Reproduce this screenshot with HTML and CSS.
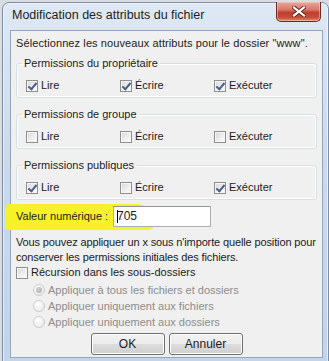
FILE: index.html
```html
<!DOCTYPE html>
<html lang="fr">
<head>
  <meta charset="UTF-8" />
  <meta name="viewport" content="width=device-width, initial-scale=1.0"/>
  <title>Modification des attributs du fichier</title>
  <link rel="stylesheet" href="styles.css">
</head>
<body>
  <div class="window">
    <div class="titlebar">
      <span class="title">Modification des attributs du fichier</span>
      <button class="close" type="button" aria-label="Fermer">
        <svg width="14" height="11" viewBox="0 0 14 11">
          <path d="M2 1.5 L12 9.5 M12 1.5 L2 9.5" stroke="#5a2a24" stroke-width="4" stroke-linecap="square"/>
          <path d="M2 1.5 L12 9.5 M12 1.5 L2 9.5" stroke="#ffffff" stroke-width="2.2" stroke-linecap="square"/>
        </svg>
      </button>
    </div>
    <div class="client">
      <p class="intro">Sélectionnez les nouveaux attributs pour le dossier "www".</p>

      <fieldset class="group">
        <legend>Permissions du propriétaire</legend>
        <div class="perm-row">
          <label class="check"><span class="box checked"></span>Lire</label>
          <label class="check"><span class="box checked"></span>Écrire</label>
          <label class="check"><span class="box checked"></span>Exécuter</label>
        </div>
      </fieldset>

      <fieldset class="group">
        <legend>Permissions de groupe</legend>
        <div class="perm-row">
          <label class="check"><span class="box"></span>Lire</label>
          <label class="check"><span class="box"></span>Écrire</label>
          <label class="check"><span class="box"></span>Exécuter</label>
        </div>
      </fieldset>

      <fieldset class="group">
        <legend>Permissions publiques</legend>
        <div class="perm-row">
          <label class="check"><span class="box checked"></span>Lire</label>
          <label class="check"><span class="box"></span>Écrire</label>
          <label class="check"><span class="box checked"></span>Exécuter</label>
        </div>
      </fieldset>

      <div class="value-row">
        <span class="marker"></span>
        <label class="value-label">Valeur numérique :</label>
        <div class="field"><span class="caret"></span>705</div>
      </div>

      <p class="hint">Vous pouvez appliquer un x sous n'importe quelle position pour<br>conserver les permissions initiales des fichiers.</p>

      <label class="check recursion"><span class="box"></span>Récursion dans les sous-dossiers</label>

      <div class="radios">
        <div class="radio"><span class="dot selected"></span>Appliquer à tous les fichiers et dossiers</div>
        <div class="radio"><span class="dot"></span>Appliquer uniquement aux fichiers</div>
        <div class="radio"><span class="dot"></span>Appliquer uniquement aux dossiers</div>
      </div>

      <div class="buttons">
        <button type="button" class="btn">OK</button>
        <button type="button" class="btn">Annuler</button>
      </div>
    </div>
  </div>
</body>
</html>
```

FILE: styles.css
```css
* {
  box-sizing: border-box;
  font-family: 'Liberation Sans', Arial, sans-serif;
}

body {
  margin: 0;
  background-color: #d9dde2;
  height: 361px;
  overflow: hidden;
  font-size: 11px;
  line-height: 15px;
  color: #1b1b1b;
  white-space: nowrap;
}

.window {
  margin: 2px 0 0 2px;
  width: 327px;
  height: 362px;
  border: 1px solid #7b8ea6;
  border-radius: 7px 7px 0 0;
  background: linear-gradient(to bottom, #dfe9f5 0%, #cbdaed 40%, #c2d4ea 100%);
  box-shadow: inset 0 0 0 1px rgba(255, 255, 255, 0.55);
  padding: 0 5px 0 7px;
}

.titlebar {
  height: 27px;
  display: flex;
  align-items: flex-start;
}

.title {
  margin: 4px 0 0 2px;
  font-size: 12.5px;
  line-height: 16px;
  color: #1e1e1e;
}

.close {
  margin: -1px 2px 0 auto;
  width: 45px;
  height: 20px;
  padding: 0;
  border: 1px solid #6b2b22;
  border-top: none;
  border-radius: 0 0 5px 5px;
  background: linear-gradient(to bottom, #e9a99a 0%, #d7786a 40%, #c0402f 55%, #c94a37 80%, #e08a6e 100%);
  box-shadow: inset 0 0 0 1px rgba(255, 220, 210, 0.45);
  display: flex;
  align-items: center;
  justify-content: center;
}

.client {
  width: 313px;
  height: 328px;
  border: 1px solid #95a6bb;
  background-color: #f0f0f0;
  padding: 5px 5px 4px 5px;
}

.intro {
  margin: 0 0 5px 0;
  letter-spacing: 0.1px;
}

.group {
  margin: 0 0 9px 0;
  padding: 7px 0 4px 9px;
  border: 1px solid #d5dfe5;
  border-radius: 3px;
  box-shadow: inset 0 0 0 1px #ffffff;
  width: 301px;
}

.group legend {
  padding: 0 2px;
  margin-left: -4px;
}

.perm-row {
  display: grid;
  grid-template-columns: 94px 94px auto;
}

.check {
  display: flex;
  align-items: center;
  gap: 3px;
}

.box {
  width: 12px;
  height: 12px;
  border: 1px solid #8e8f8f;
  background: linear-gradient(135deg, #d6d6d6 0%, #f4f4f4 70%, #ffffff 100%);
  box-shadow: inset 0 0 0 1px #f6f6f6;
  position: relative;
}

.box.checked::after {
  content: "";
  position: absolute;
  left: 3px;
  top: 0px;
  width: 3px;
  height: 7px;
  border: solid #4a5f88;
  border-width: 0 2px 2px 0;
  transform: rotate(40deg);
}

.value-row {
  position: relative;
  display: flex;
  align-items: center;
  margin-top: -4px;
  height: 22px;
}

.marker {
  position: absolute;
  left: -11px;
  top: -1px;
  width: 150px;
  height: 26px;
  background-color: #f6f227;
  border-radius: 10px 40px 14px 6px;
}

.value-label {
  position: relative;
  width: 97px;
}

.field {
  position: relative;
  width: 98px;
  height: 21px;
  border: 1px solid #abadb3;
  border-top-color: #8f9299;
  background-color: #ffffff;
  padding: 2px 3px;
  font-size: 12px;
  line-height: 15px;
  display: flex;
  align-items: center;
}

.caret {
  width: 1px;
  height: 13px;
  background-color: #000000;
  margin-right: -1px;
}

.hint {
  margin: 8px 0 0 0;
  letter-spacing: -0.13px;
}

.recursion {
  margin-top: 0;
}

.radios {
  margin: 2px 0 0 17px;
  color: #8d8d8d;
}

.radio {
  display: flex;
  align-items: center;
  gap: 3px;
  height: 16px;
}

.dot {
  width: 12px;
  height: 12px;
  border-radius: 50%;
  border: 1px solid #cdcdcd;
  background: radial-gradient(circle at 40% 35%, #ffffff 0%, #ececec 70%, #e0e0e0 100%);
  position: relative;
}

.dot.selected::after {
  content: "";
  position: absolute;
  left: 2px;
  top: 2px;
  width: 6px;
  height: 6px;
  border-radius: 50%;
  background: radial-gradient(circle at 40% 35%, #d0d0d0 0%, #a9a9a9 100%);
}

.buttons {
  display: flex;
  justify-content: center;
  gap: 4px;
  margin-top: 3px;
}

.btn {
  width: 74px;
  height: 22px;
  border: 1px solid #707070;
  border-radius: 3px;
  background: linear-gradient(to bottom, #f2f2f2 0%, #ebebeb 50%, #dddddd 50%, #cfcfcf 100%);
  box-shadow: inset 0 0 0 1px #fcfcfc;
  font-size: 12px;
  color: #1b1b1b;
  padding: 0;
}
```
